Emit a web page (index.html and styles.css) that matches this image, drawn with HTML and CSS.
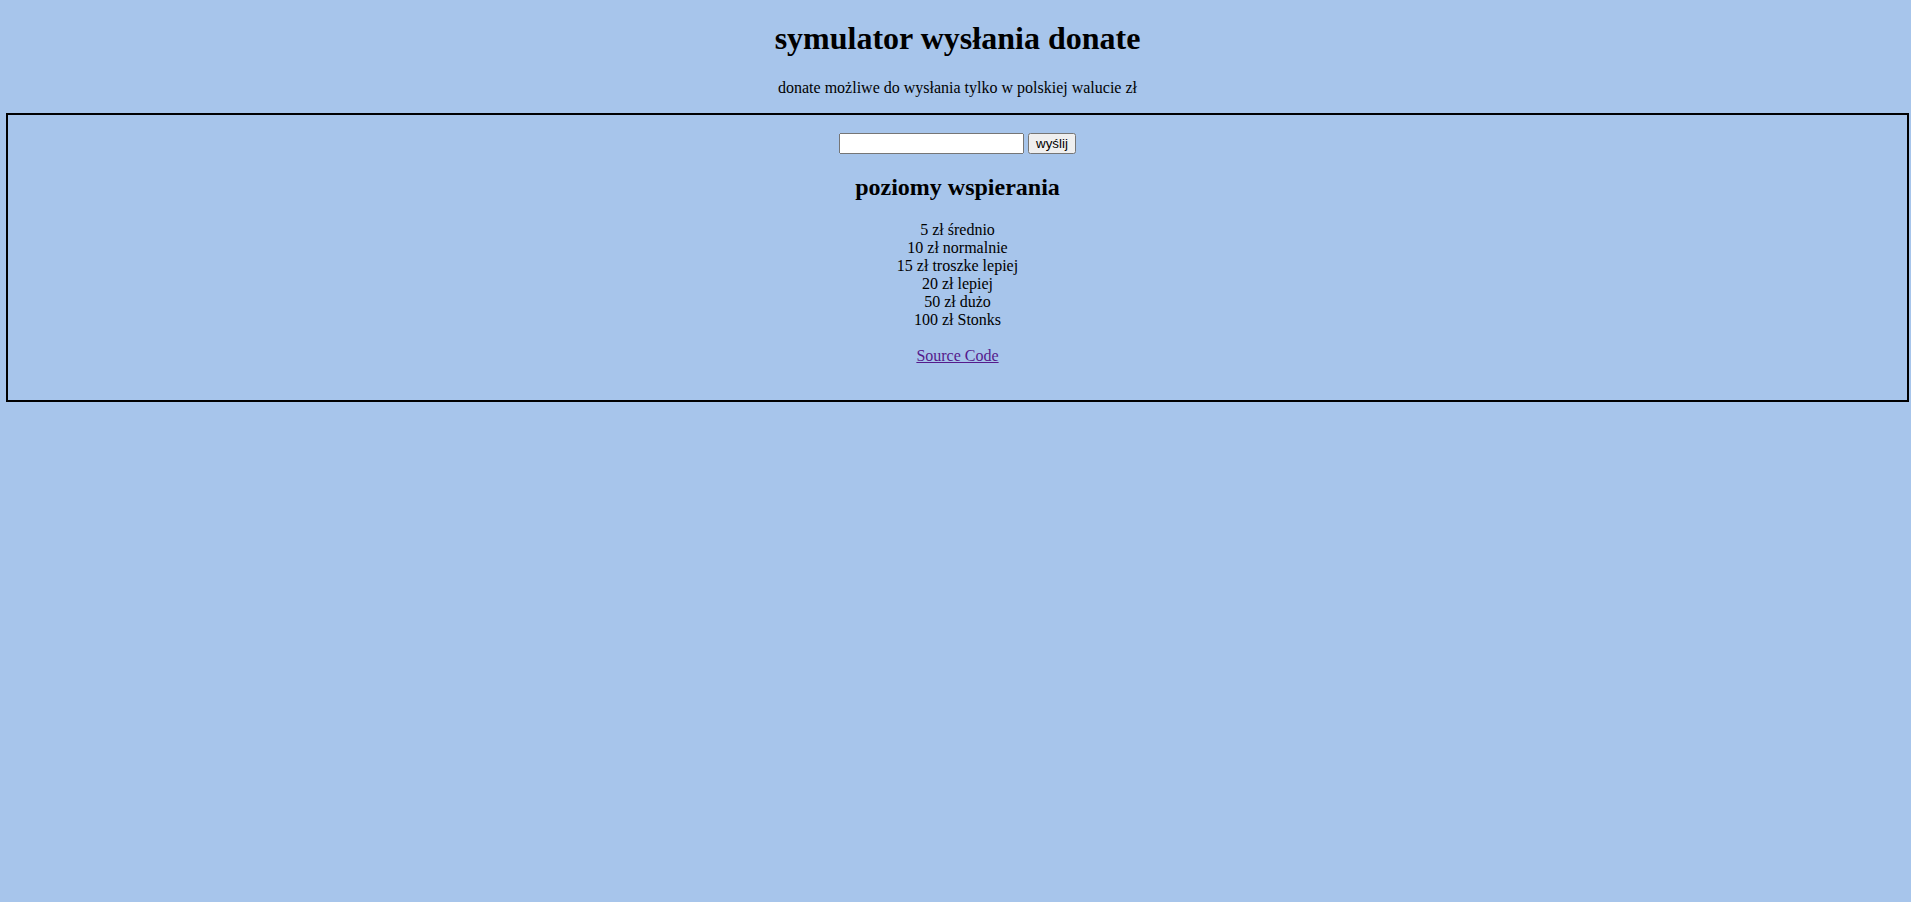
FILE: index.html
```html
<!DOCTYPE html>
<html lang="pl">
<head>
<meta charset="utf-8">
<title>symulator wysłania donate</title>
<link rel="stylesheet" href="styles.css">
</head>
<body>
<h1 class="title">symulator wysłania donate</h1>
<p class="subtitle">donate możliwe do wysłania tylko w polskiej walucie zł</p>
<div class="box">
  <form class="donate-form">
    <input type="text" class="amount"> <button type="button" class="send">wyślij</button>
  </form>
  <h2 class="levels-title">poziomy wspierania</h2>
  <p class="levels">5 zł średnio<br>10 zł normalnie<br>15 zł troszke lepiej<br>20 zł lepiej<br>50 zł dużo<br>100 zł Stonks</p>
  <p class="source"><a href="#" class="source-link">Source Code</a></p>
</div>
</body>
</html>
```
FILE: styles.css
```css
html, body {
  background: #a7c5eb;
}
body {
  margin: 6px 2px 6px 6px;
  font-family: "Liberation Serif", "Times New Roman", serif;
  font-size: 16px;
  color: #000;
  text-align: center;
}
.title {
  font-size: 32px;
  margin: 14px 0 22px;
}
.subtitle {
  margin: 16px 0;
}
.box {
  border: 2px solid #000;
  padding-bottom: 18px;
}
.donate-form {
  margin: 18px 0 0;
}
.amount {
  font-family: "Liberation Sans", Arial, sans-serif;
  font-size: 13.33px;
}
.send {
  font-family: "Liberation Sans", Arial, sans-serif;
  font-size: 13.33px;
}
.levels-title {
  font-size: 24px;
  margin: 19.5px 0 20.5px;
}
.levels {
  margin: 16px 0;
}
.source {
  margin: 18px 0 17px;
}
.source-link {
  color: #551a8b;
}
```
